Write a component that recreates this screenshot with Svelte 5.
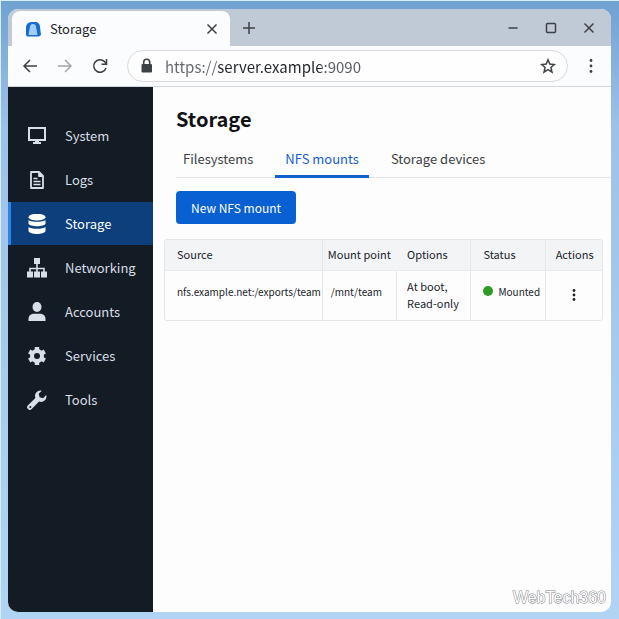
<script>
  let tabs = ["Filesystems", "NFS mounts", "Storage devices"];
  let activeTab = $state("NFS mounts");
  let address = $state("https://server.example:9090");

  let nav = ["System", "Logs", "Storage", "Networking", "Accounts", "Services", "Tools"];
  let current = $state("Storage");

  let mounts = [
    {
      source: "nfs.example.net:/exports/team",
      point: "/mnt/team",
      options: ["At boot,", "Read-only"],
      status: "Mounted"
    }
  ];

  function go(e, name) {
    e.preventDefault();
    current = name;
  }
</script>

{#snippet navIcon(name)}
  <svg class="nav-icon" viewBox="0 0 20 20" width="20" height="20" aria-hidden="true">
    {#if name === "System"}
      <rect x="2" y="2" width="16" height="12" fill="none" stroke="currentColor" stroke-width="2" />
      <path d="M8 14h4v2h2v2H6v-2h2z" fill="currentColor" />
    {:else if name === "Logs"}
      <path d="M4 2h8l4 4v12H4z M12 2v4h4" fill="none" stroke="currentColor" stroke-width="1.8" stroke-linejoin="round" />
      <path d="M6.500 8.500h4M6.500 11.500h7M6.500 14.500h7" stroke="currentColor" stroke-width="1.4" />
    {:else if name === "Storage"}
      <ellipse cx="10" cy="3.200" rx="8.500" ry="3.400" fill="currentColor" />
      <path d="M1.500 6c2 2.400 15 2.400 17 0v3.500c-1 3.600-16 3.600-17 0z" fill="currentColor" />
      <path d="M1.500 13c2 2.400 15 2.400 17 0v4c-1 3.900-16 3.900-17 0z" fill="currentColor" />
    {:else if name === "Networking"}
      <rect x="7" y="0" width="6" height="6" fill="currentColor" />
      <path d="M10 6v8M3 14v-3.500h14V14" fill="none" stroke="currentColor" stroke-width="1.600" />
      <path d="M0 13.500h6v6H0zM7 13.500h6v6H7zM14 13.500h6v6h-6z" fill="currentColor" />
    {:else if name === "Accounts"}
      <ellipse cx="10" cy="5" rx="4.500" ry="5" fill="currentColor" />
      <path d="M1.500 19v-2c0-3.500 2.500-5.200 6-5.200h5c3.500 0 6 1.700 6 5.200v2z" fill="currentColor" />
    {:else if name === "Services"}
      <circle cx="10" cy="10" r="5" fill="none" stroke="currentColor" stroke-width="4" />
      <g stroke="currentColor" stroke-width="4.400">
        {#each [0, 60, 120, 180, 240, 300] as angle}
          <path d="M10 1v3" transform="rotate({angle} 10 10)" />
        {/each}
      </g>
    {:else}
      <path
        fill-rule="evenodd"
        d="M14.800.7a5.400 5.400 0 0 0-6.400 7.200L1 15.200a2.600 2.600 0 0 0 3.700 3.800l7.400-7.400a5.400 5.400 0 0 0 7.100-6.500l-3.100 3.100-3.500-.9-.9-3.500zM2.300 17a1 1 0 1 0 2 0 1 1 0 1 0-2 0z"
        fill="currentColor" />
    {/if}
  </svg>
{/snippet}

{#snippet kebab(gap)}
  <svg viewBox="0 0 16 16" width="16" height="16" aria-hidden="true">
    <g fill="currentColor">
      <circle cx="8" cy={8 - gap} r="1.400" />
      <circle cx="8" cy="8" r="1.400" />
      <circle cx="8" cy={8 + gap} r="1.400" />
    </g>
  </svg>
{/snippet}

<div class="window">
  <div class="tab-strip">
    <div class="browser-tab">
      <svg viewBox="0 0 16 16" width="16" height="16" aria-hidden="true">
        <path d="M1 14V6a6 6 0 0 1 6-5h3c3 0 5 2 5 5l1 8-2 1.500H2z" fill="#176bd2" />
        <path d="M3.500 14 5 5.500C5.500 3.500 6.500 3 8 3s2.500.7 3 2.500L12.500 14z" fill="#a2cfff" />
      </svg>
      <span class="tab-title">Storage</span>
      <button class="icon" aria-label="Close tab">
        <svg viewBox="0 0 16 16" width="16" height="16"><path d="M3.500 3.500l9 9M12.500 3.500l-9 9" /></svg>
      </button>
    </div>
    <button class="icon new-tab" aria-label="New tab">
      <svg viewBox="0 0 16 16" width="16" height="16"><path d="M8 2v12M2 8h12" /></svg>
    </button>
    <div class="window-buttons">
      <button class="icon" aria-label="Minimize">
        <svg viewBox="0 0 16 16" width="16" height="16"><path d="M3.500 8h9" /></svg>
      </button>
      <button class="icon" aria-label="Maximize">
        <svg viewBox="0 0 16 16" width="16" height="16"><rect x="3.500" y="3.500" width="9" height="9" rx="1" /></svg>
      </button>
      <button class="icon" aria-label="Close">
        <svg viewBox="0 0 16 16" width="16" height="16"><path d="M3.500 3.500l9 9M12.500 3.500l-9 9" /></svg>
      </button>
    </div>
  </div>

  <div class="toolbar">
    <button class="icon" aria-label="Back">
      <svg viewBox="0 0 16 16" width="16" height="16"><path d="M15 8H2M8 2L2 8l6 6" /></svg>
    </button>
    <button class="icon muted" aria-label="Forward">
      <svg viewBox="0 0 16 16" width="16" height="16"><path d="M1 8h13M8 2l6 6-6 6" /></svg>
    </button>
    <button class="icon" aria-label="Reload">
      <svg viewBox="0 0 16 16" width="16" height="16">
        <path d="M14 10a6.300 6.300 0 1 1-1.500-6.500L14.500 6M14.500 1v5.200H9.500" />
      </svg>
    </button>
    <div class="address">
      <svg viewBox="0 0 16 16" width="16" height="16" aria-hidden="true">
        <rect x="2.500" y="6" width="10.500" height="8.500" rx="1" fill="#3c4146" />
        <path d="M4.700 7V4.300a3 3 0 0 1 6 0V7" fill="none" stroke="#3c4146" stroke-width="1.600" />
      </svg>
      <input type="text" aria-label="Address" bind:value={address} />
      <button class="icon" aria-label="Bookmark">
        <svg viewBox="0 0 16 16" width="16" height="16">
          <path d="M8 1.800l1.800 4.300 4.600.4-3.500 3 1.100 4.600L8 11.700l-4 2.400 1.100-4.600-3.500-3 4.600-.4z" />
        </svg>
      </button>
    </div>
    <button class="icon" aria-label="Browser menu">{@render kebab(5.5)}</button>
  </div>

  <div class="page">
    <nav>
      {#each nav as name}
        <a href="#{name.toLowerCase()}" class:current={current === name} onclick={e => go(e, name)}>
          {@render navIcon(name)}
          {name}
        </a>
      {/each}
    </nav>

    <main>
      <h1>Storage</h1>
      <div class="tabs" role="tablist">
        {#each tabs as tab}
          <button
            role="tab"
            aria-selected={activeTab === tab}
            class:active={activeTab === tab}
            onclick={() => (activeTab = tab)}>{tab}</button>
        {/each}
      </div>
      <button class="primary">New NFS mount</button>

      <div class="table-box">
        <table>
          <thead>
            <tr>
              <th class="source">Source</th>
              <th class="point">Mount point</th>
              <th class="options">Options</th>
              <th class="status">Status</th>
              <th class="actions">Actions</th>
            </tr>
          </thead>
          <tbody>
            {#each mounts as mount}
              <tr>
                <td class="source">{mount.source}</td>
                <td class="point">{mount.point}</td>
                <td class="options">{mount.options[0]}<br />{mount.options[1]}</td>
                <td class="status"><span class="state"><i class="dot"></i>{mount.status}</span></td>
                <td class="actions">
                  <button class="icon" aria-label="Mount actions">{@render kebab(4.5)}</button>
                </td>
              </tr>
            {/each}
          </tbody>
        </table>
      </div>
    </main>
  </div>
  <span class="watermark">WebTech360</span>
</div>

<style>
  :global(body) {
    box-sizing: border-box;
    min-height: 100vh;
    padding: 8px 8px 7px 7px;
    border-top: 1px solid #d5eff8;
    border-left: 1px solid #d5eff8;
    background: linear-gradient(#6fa1d1, #9dc1e8 20%, #b1d4f5);
    font-family: "Noto Sans CJK SC", "Noto Sans", sans-serif;
  }

  * {
    box-sizing: border-box;
  }

  button,
  input {
    margin: 0;
    padding: 0;
    border: 0;
    background: none;
    font: inherit;
    color: inherit;
  }

  button {
    cursor: pointer;
  }

  .window {
    position: relative;
    display: flex;
    flex-direction: column;
    min-height: calc(100vh - 16px);
    border-radius: 10px;
    overflow: hidden;
    background: #fdfdfe;
    color: #202328;
  }

  .icon {
    display: flex;
    flex: none;
    color: #3c4146;
  }

  .icon svg {
    fill: none;
    stroke: currentColor;
    stroke-width: 1.5;
  }

  .icon svg g {
    stroke: none;
  }

  .muted {
    color: #a3a6ab;
  }

  .tab-strip {
    display: flex;
    align-items: center;
    height: 37px;
    padding-left: 4px;
    background: #c0c9d6;
  }

  .browser-tab {
    display: flex;
    align-items: center;
    width: 218px;
    height: 35px;
    margin-top: 2px;
    padding: 0 10px 0 13px;
    border-radius: 8px 8px 0 0;
    background: #fbfcfe;
  }

  .tab-title {
    flex: 1;
    margin-left: 9px;
    font-size: 13px;
  }

  .new-tab {
    margin-left: 11px;
  }

  .window-buttons {
    display: flex;
    gap: 22px;
    margin-left: auto;
    padding-right: 14px;
  }

  .toolbar {
    display: flex;
    align-items: center;
    gap: 19px;
    height: 41px;
    padding: 0 12px 0 14px;
    border-bottom: 1px solid #d3d7dc;
    background: #fbfcfe;
  }

  .address {
    display: flex;
    flex: 1;
    align-items: center;
    gap: 10px;
    height: 32px;
    margin: 0 -4px 0 0;
    padding: 0 11px;
    border: 1px solid #d7d9de;
    border-radius: 16px;
    background: #fefefe;
  }

  /* scheme and port are dimmed, the host stays dark */
  .address input {
    flex: 1;
    min-width: 0;
    height: 24px;
    font-size: 15px;
    color: transparent;
    caret-color: #202328;
    background: linear-gradient(90deg, #63666b 52px, #202328 52px 156px, #55585d 156px);
    -webkit-background-clip: text;
    background-clip: text;
    outline: none;
  }

  .page {
    display: flex;
    flex: 1;
  }

  nav {
    display: flex;
    flex: none;
    flex-direction: column;
    gap: 1px;
    width: 145px;
    padding-top: 27px;
    background: #131b24;
  }

  nav a {
    display: flex;
    align-items: center;
    gap: 18px;
    height: 43px;
    padding-left: 16px;
    border-left: 3px solid transparent;
    color: #d9dfe8;
    font-size: 13px;
    text-decoration: none;
  }

  nav a.current {
    border-color: #2e83e6;
    background: #0c3f7c;
    color: #fff;
  }

  .nav-icon {
    flex: none;
  }

  main {
    flex: 1;
    min-width: 0;
    padding: 16px 8px 0 11px;
  }

  h1 {
    margin: 0 0 0 12px;
    font-size: 20px;
    line-height: 32px;
    font-weight: bold;
    color: #101216;
  }

  .tabs {
    display: flex;
    gap: 12px;
    margin: 6px -8px 0 12px;
    border-bottom: 1px solid #e2e5e8;
  }

  .tabs button {
    height: 37px;
    margin-bottom: -1px;
    padding: 0 10px;
    border-bottom: 3px solid transparent;
    font-size: 13px;
    color: #3b3e42;
    white-space: nowrap;
  }

  .tabs button:first-child {
    padding-left: 7px;
  }

  .tabs button.active {
    border-color: #1260cb;
    color: #1260cb;
  }

  .primary {
    display: block;
    height: 33px;
    margin: 13px 0 15px 12px;
    padding: 0 15px;
    border-radius: 4px;
    background: #0860d3;
    color: #fff;
    font-size: 12px;
  }

  .table-box {
    border: 1px solid #e4e6e9;
    border-radius: 3px;
    overflow: hidden;
  }

  table {
    width: 100%;
    table-layout: fixed;
    border-collapse: collapse;
    font-size: 11px;
    line-height: 17px;
  }

  th {
    height: 30px;
    padding: 0 0 0 10px;
    background: #f3f4f6;
    font-weight: normal;
    text-align: left;
    white-space: nowrap;
  }

  td {
    height: 50px;
    padding: 0 0 0 10px;
    border-top: 1px solid #e9ebed;
    white-space: nowrap;
  }

  th + th,
  td + td {
    border-left: 1px solid #e4e6e9;
  }

  th.options {
    border-left-color: #f3f4f6;
  }

  .source {
    width: 36%;
    padding-left: 12px;
  }

  .point {
    width: 17%;
    padding-left: 5px;
  }

  td.point {
    padding-left: 8px;
  }

  .options {
    width: 17%;
  }

  .status {
    width: 17%;
    padding-left: 12px;
  }

  .actions {
    width: 13%;
  }

  td.source,
  td.point,
  td.status {
    padding-bottom: 8px;
    font-size: 10px;
  }

  td.actions .icon {
    margin: 0 auto;
    color: #202328;
  }

  td.actions {
    padding: 0;
  }

  .state {
    display: flex;
    align-items: center;
    gap: 5px;
  }

  .dot {
    width: 10px;
    height: 10px;
    border-radius: 50%;
    background: #2e9b23;
  }

  .watermark {
    position: absolute;
    right: 5px;
    bottom: 4px;
    font-family: "Liberation Sans", Arial, sans-serif;
    font-size: 16px;
    line-height: 20px;
    color: #fff;
    -webkit-text-stroke: 1px #808285;
    paint-order: stroke fill;
  }
</style>
